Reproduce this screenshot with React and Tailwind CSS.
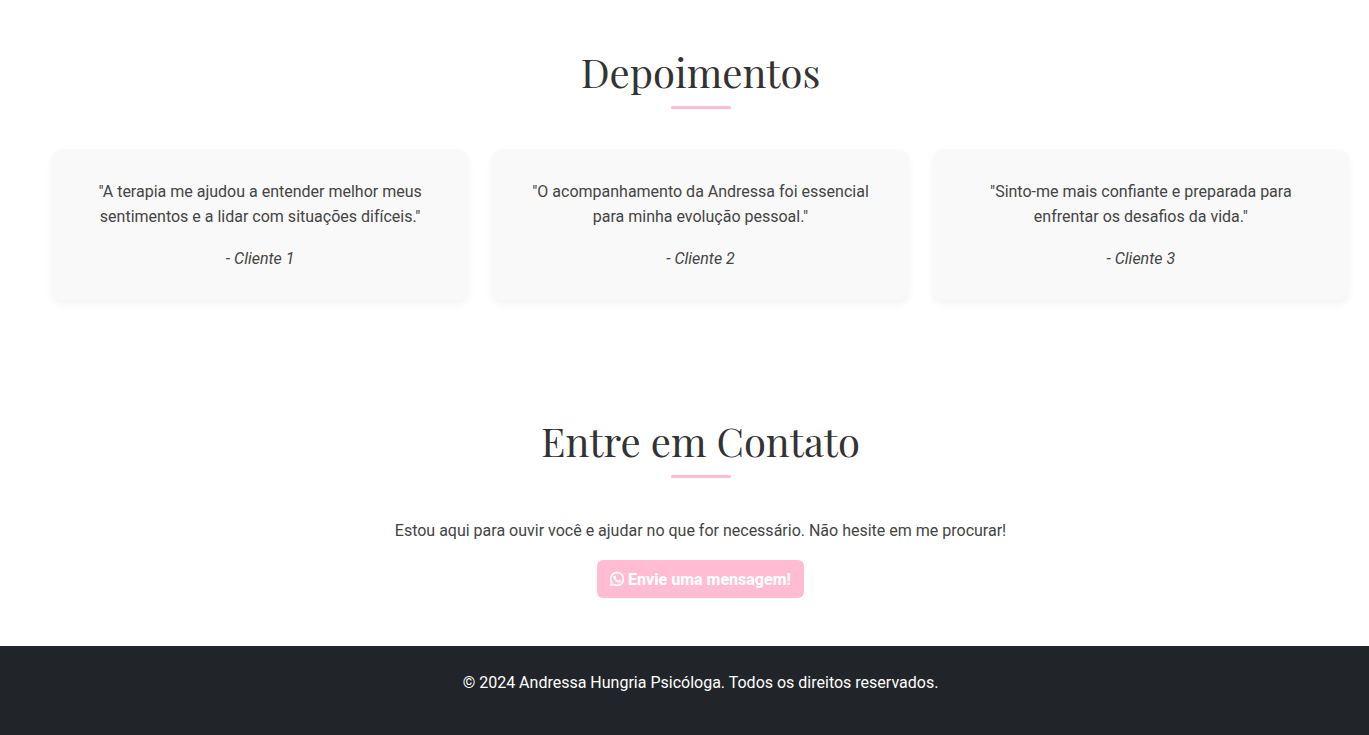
import { FaWhatsapp } from "react-icons/fa";

const testimonials = [
  { text: '"A terapia me ajudou a entender melhor meus sentimentos e a lidar com situações difíceis."', author: "- Cliente 1" },
  { text: '"O acompanhamento da Andressa foi essencial para minha evolução pessoal."', author: "- Cliente 2" },
  { text: '"Sinto-me mais confiante e preparada para enfrentar os desafios da vida."', author: "- Cliente 3" },
];

function Heading({ children }) {
  return (
    <div className="mb-10 flex flex-col items-center">
      <h2 className="font-['Playfair_Display','Liberation_Serif',serif] text-[40px] leading-[44px] text-[#333333]">
        {children}
      </h2>
      <span className="mt-3 h-[3px] w-[60px] rounded-sm bg-[#ffbcd3]" />
    </div>
  );
}

export default function App() {
  return (
    <div className="bg-white font-[Roboto,sans-serif] text-base leading-[25px] text-[#444444] antialiased">
      <main className="pr-5 pl-[52px]">
        <section className="pt-[50px] pb-[119px]">
          <Heading>Depoimentos</Heading>
          <div className="grid grid-cols-3 gap-6">
            {testimonials.map((t) => (
              <figure key={t.author} className="rounded-[10px] bg-[#f9f9f9] px-[30px] pt-[30px] pb-[29px] text-center shadow-[0_4px_8px_rgba(0,0,0,0.05)]">
                <blockquote>{t.text}</blockquote>
                <figcaption className="mt-[17px] italic">{t.author}</figcaption>
              </figure>
            ))}
          </div>
        </section>
        <section className="flex flex-col items-center pb-12 text-center">
          <Heading>Entre em Contato</Heading>
          <p className="mb-[17px]">Estou aqui para ouvir você e ajudar no que for necessário. Não hesite em me procurar!</p>
          <a href="#contato" className="flex h-[38px] items-center gap-1 rounded-md bg-[#ffbcd3] px-[13px] font-extrabold text-white">
            <FaWhatsapp className="h-4 w-[14px]" stroke="currentColor" strokeWidth="16" />
            Envie uma mensagem!
          </a>
        </section>
      </main>
      <footer className="bg-[#212529] pt-6 pr-5 pb-10 pl-[52px] text-center text-white">
        <p>© 2024 Andressa Hungria Psicóloga. Todos os direitos reservados.</p>
      </footer>
    </div>
  );
}
